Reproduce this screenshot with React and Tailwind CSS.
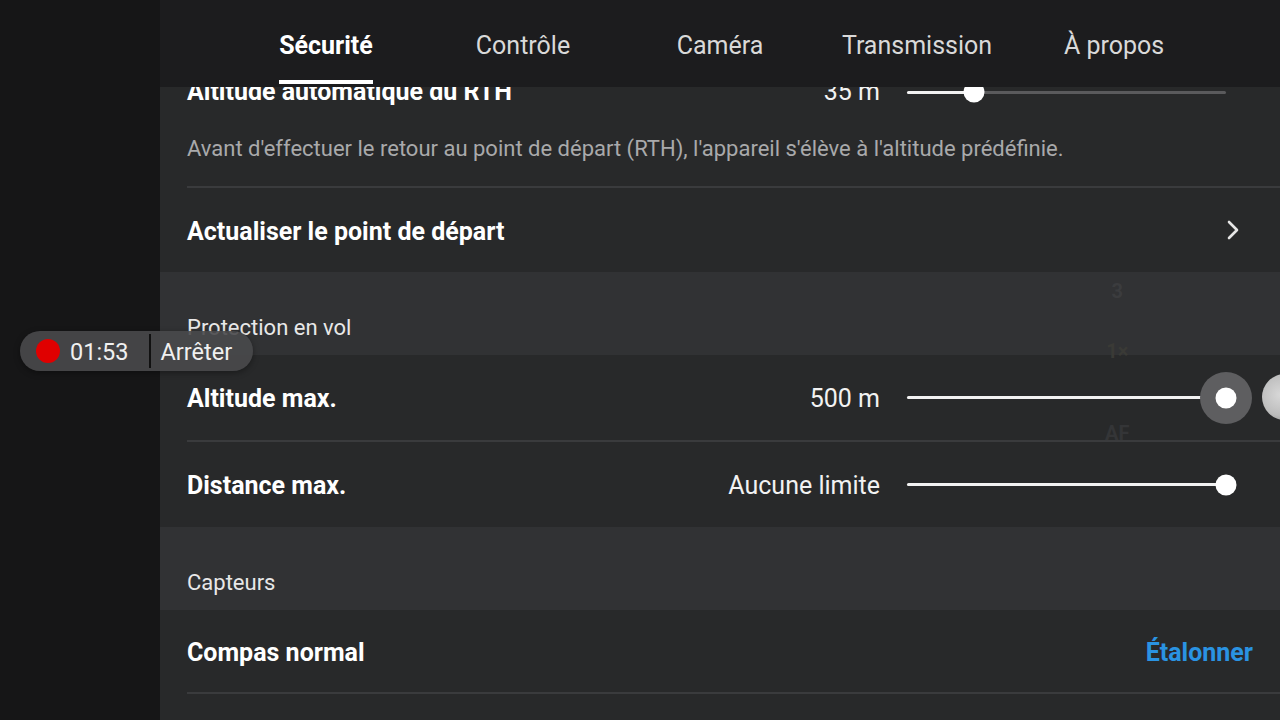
import React from "react";

const tabs = ["Sécurité", "Contrôle", "Caméra", "Transmission", "À propos"];

// slider: track from value label to the right edge, thumb at pct
function Slider({ pct, halo = false }) {
  return (
    <div className="relative w-[319px] h-[3px] mr-[54px] rounded-full bg-[#5a5a5c]">
      <div className="absolute left-0 top-0 h-full rounded-full bg-[#f2f2f2]" style={{ width: `${pct}%` }} />
      {halo && (
        <div
          className="absolute top-1/2 w-[52px] h-[52px] -translate-x-1/2 -translate-y-1/2 rounded-full bg-[#5e5e60]"
          style={{ left: `${pct}%` }}
        />
      )}
      <div
        className="absolute top-1/2 w-[21px] h-[21px] -translate-x-1/2 -translate-y-1/2 rounded-full bg-white"
        style={{ left: `${pct}%` }}
      />
    </div>
  );
}

function SliderRow({ title, value, pct, halo, divider }) {
  return (
    <div className="bg-[#28292a]">
      <div className="flex items-center h-[85px] pl-[27px]">
        <span className="text-[25px] leading-[30px] pt-[3px] font-bold text-white flex-1">{title}</span>
        <span className="text-[25px] leading-[30px] pt-[3px] text-[#f2f2f2] mr-[27px]">{value}</span>
        <Slider pct={pct} halo={halo} />
      </div>
      {divider && <div className="ml-[27px] h-[2px] bg-[#3a3b3d]" />}
    </div>
  );
}

function Section({ label }) {
  return (
    <div className="bg-[#313234] flex items-end pl-[27px] h-[83px] pb-[14px]">
      <span className="text-[22px] leading-[26px] text-[#e8e8e8]">{label}</span>
    </div>
  );
}

export default function App() {
  return (
    <div className="w-[1280px] h-[720px] flex overflow-hidden bg-[#161617]" style={{ fontFamily: "Roboto, 'Noto Sans', sans-serif" }}>
      {/* left dark strip */}
      <div className="w-[160px] shrink-0 bg-[#161617]" />

      <div className="relative flex-1 flex flex-col overflow-hidden bg-[#28292a]">
        {/* tabs */}
        <div className="relative z-10 h-[87px] shrink-0 bg-[#1c1c1e] flex justify-center">
          {tabs.map((t, i) => (
            <div key={t} className="w-[197px] flex justify-center">
              <div className="relative flex items-center h-full pt-[4px]">
                <span className={`text-[25px] ${i === 0 ? "font-bold text-white" : "text-[#d9d9d9]"}`}>{t}</span>
                {i === 0 && <div className="absolute left-0 right-0 bottom-[3px] h-[4px] bg-white" />}
              </div>
            </div>
          ))}
        </div>

        {/* scrolled list */}
        <div className="flex-1 flex flex-col overflow-hidden">
          <div className="bg-[#28292a] -mt-[9px]">
            <div className="flex items-center h-[28px] pl-[27px]">
              <span className="text-[25px] leading-[30px] font-bold text-white flex-1">Altitude automatique du RTH</span>
              <span className="text-[25px] leading-[30px] text-[#f2f2f2] mr-[27px]">35 m</span>
              <Slider pct={21} />
            </div>
            <p className="mt-[30px] pl-[27px] text-[22px] leading-[26px] text-[#a9a9ab] pb-[24px]">
              Avant d'effectuer le retour au point de départ (RTH), l'appareil s'élève à l'altitude prédéfinie.
            </p>
            <div className="ml-[27px] h-[2px] bg-[#3a3b3d]" />
          </div>

          <div className="bg-[#28292a] flex items-center h-[84px] pl-[27px] pr-[40px]">
            <span className="text-[25px] leading-[30px] pt-[3px] font-bold text-white flex-1">Actualiser le point de départ</span>
            <svg width="14" height="22" viewBox="0 0 14 22" fill="none">
              <path d="M3 3l8 8-8 8" stroke="#e6e6e6" strokeWidth="2.6" strokeLinecap="round" strokeLinejoin="round" />
            </svg>
          </div>

          <Section label="Protection en vol" />
          <SliderRow title="Altitude max." value="500 m" pct={100} halo divider />
          <SliderRow title="Distance max." value="Aucune limite" pct={100} />
          <Section label="Capteurs" />

          <div className="bg-[#28292a]">
            <div className="flex items-center h-[82px] pl-[27px] pr-[27px] pt-[4px]">
              <span className="text-[25px] leading-[30px] font-bold text-white flex-1">Compas normal</span>
              <span className="text-[25px] leading-[30px] font-bold text-[#2a93e2]">Étalonner</span>
            </div>
            <div className="ml-[27px] h-[2px] bg-[#3a3b3d]" />
          </div>
          <div className="flex-1 bg-[#28292a]" />
        </div>

        {/* faint camera overlay behind the panel */}
        <div className="absolute left-[945px] top-[276px] flex flex-col items-center text-[20px] leading-[30px] font-bold text-[#3b3c3e] pointer-events-none">
          <span>3</span>
          <span className="mt-[30px] text-[#3a3a36]">1×</span>
          <span className="mt-[52px] text-[#343537]">AF</span>
        </div>
        <div className="absolute left-[1102px] top-[374px] w-[46px] h-[46px] rounded-full pointer-events-none bg-[radial-gradient(circle_at_40%_45%,#d8d8d8_0%,#bdbdbd_55%,#707070_100%)]" />
      </div>

      {/* recording pill */}
      <div className="absolute left-[20px] top-[331px] h-[40px] w-[233px] rounded-full bg-[#49494b]/90 shadow-[0_2px_6px_rgba(0,0,0,0.35)] flex items-center pl-[16px]">
        <div className="w-[24px] h-[24px] rounded-full bg-[#e00000]" />
        <span className="ml-[10px] text-[23.5px] leading-[28px] pt-[2px] text-[#f0f0f0]">01:53</span>
        <div className="ml-[20px] w-[2px] h-[34px] bg-[#111]" />
        <span className="ml-[10px] text-[23.5px] leading-[28px] pt-[2px] text-[#f0f0f0]">Arrêter</span>
      </div>
    </div>
  );
}
